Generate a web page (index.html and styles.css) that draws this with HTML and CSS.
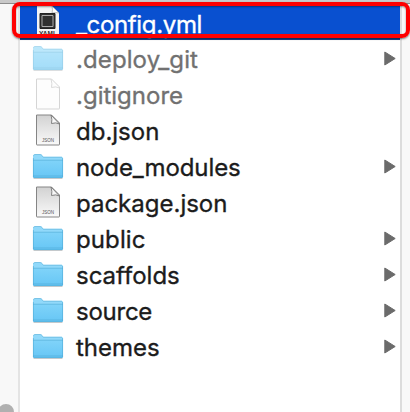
FILE: index.html
```
<!DOCTYPE html>
<html lang="en">
<head>
<meta charset="utf-8">
<title>Files</title>
<link rel="stylesheet" href="styles.css">
</head>
<body>
<svg class="defs" aria-hidden="true">
  <defs>
    <linearGradient id="fold" x1="0" y1="0" x2="0" y2="1"><stop offset="0" stop-color="#80d3f9"/><stop offset="1" stop-color="#66c6f5"/></linearGradient>
    <linearGradient id="paper" x1="0" y1="0" x2="0" y2="1"><stop offset="0" stop-color="#d2d2d2"/><stop offset="1" stop-color="#fafafa"/></linearGradient>
    <symbol id="folder" viewBox="0 0 32 28">
      <path d="M1.5 26h29v1h-29z" fill="#000" opacity=".2"/>
      <path d="M1 4.2Q1 2.2 3 2.2H8Q9.3 2.2 10 3.2L11.3 4.8H29.5Q31 4.8 31 6.5V10H1z" fill="#91d9fa"/>
      <path d="M1.5 4V3.7Q2 2.5 3 2.5H8Q9.3 2.5 10 3.5L11.3 5.3H30" fill="none" stroke="#6dbde2" stroke-width=".8"/>
      <path d="M1 8.2H31V24.7Q31 26 29.7 26H2.3Q1 26 1 24.7z" fill="url(#fold)"/>
      <path d="M1.4 6V24.7Q1.4 25.6 2.3 25.6H29.7Q30.6 25.6 30.6 24.7V6M1 8.2H31M1 24H31" fill="none" stroke="#4da9d5" stroke-width=".6"/>
    </symbol>
    <symbol id="file" viewBox="0 0 26 32">
      <path d="M1.5 1H16.5L24.5 9V30.5Q24.5 31 24 31H2Q1.5 31 1.5 30.5z" fill="url(#paper)" stroke="#858585" stroke-width="1"/>
      <path d="M16 1Q17.5 6 16.5 9.5Q21 8 24.5 10z" fill="#f8f8f8" stroke="#777" stroke-width=".9"/>
    </symbol>
    <symbol id="blank" viewBox="0 0 26 32">
      <path d="M1.5 1H16.5L24.5 9V30.5Q24.5 31 24 31H2Q1.5 31 1.5 30.5z" fill="#fdfdfd" stroke="#d5d5d5" stroke-width="1"/>
      <path d="M16 1Q17.5 6 16.5 9.5Q21 8 24.5 10" fill="none" stroke="#dadada" stroke-width="1"/>
    </symbol>
  </defs>
</svg>
<div class="window">
  <div class="topbar"></div>
  <div class="gutter"></div>
  <ul class="list">
    <li class="row selected">
      <span class="icon"><svg width="26" height="32" viewBox="0 0 26 32"><path d="M2 1H17L24 8V32H2z" fill="#f4f4f4"/><path d="M17 1Q18 5 17 8Q21 7 24 8z" fill="#fff" stroke="#999" stroke-width=".6"/><path d="M5 8.5H20V23.5H5z" fill="#303030" stroke="#222"/><path d="M7 10.5H18V21.5H7z" fill="#303030" stroke="#aaa"/><text class="kind yaml" x="13" y="31">YAML</text></svg></span>
      <span class="name n0">_config.yml</span>
    </li>
    <li class="row dim"><span class="icon"><svg class="faded" width="32" height="28"><use href="#folder"/></svg></span><span class="name n1">.deploy_git</span><svg class="arrow" width="12" height="15"><path d="M.8 1L11.2 7.5L.8 14z"/></svg></li>
    <li class="row dim"><span class="icon"><svg width="26" height="32"><use href="#blank"/></svg></span><span class="name n2">.gitignore</span></li>
    <li class="row"><span class="icon"><svg width="26" height="32"><use href="#file"/><text class="kind" x="13" y="27.5">JSON</text></svg></span><span class="name n3">db.json</span></li>
    <li class="row"><span class="icon"><svg width="32" height="28"><use href="#folder"/></svg></span><span class="name n4">node_modules</span><svg class="arrow" width="12" height="15"><path d="M.8 1L11.2 7.5L.8 14z"/></svg></li>
    <li class="row"><span class="icon"><svg width="26" height="32"><use href="#file"/><text class="kind" x="13" y="27.5">JSON</text></svg></span><span class="name n5">package.json</span></li>
    <li class="row"><span class="icon"><svg width="32" height="28"><use href="#folder"/></svg></span><span class="name n6">public</span><svg class="arrow" width="12" height="15"><path d="M.8 1L11.2 7.5L.8 14z"/></svg></li>
    <li class="row"><span class="icon"><svg width="32" height="28"><use href="#folder"/></svg></span><span class="name n7">scaffolds</span><svg class="arrow" width="12" height="15"><path d="M.8 1L11.2 7.5L.8 14z"/></svg></li>
    <li class="row"><span class="icon"><svg width="32" height="28"><use href="#folder"/></svg></span><span class="name n8">source</span><svg class="arrow" width="12" height="15"><path d="M.8 1L11.2 7.5L.8 14z"/></svg></li>
    <li class="row"><span class="icon"><svg width="32" height="28"><use href="#folder"/></svg></span><span class="name n9">themes</span><svg class="arrow" width="12" height="15"><path d="M.8 1L11.2 7.5L.8 14z"/></svg></li>
  </ul>
  <div class="gutter"></div>
</div>
<div class="highlight"></div>
<div class="knob"></div>
</body>
</html>
```
FILE: styles.css
```
* { box-sizing: border-box; }
body { margin: 0; overflow: hidden; background: #fff; font-family: Inter, "Liberation Sans", sans-serif; }
.defs { position: absolute; width: 0; height: 0; }
.window { width: 410px; height: 412px; display: grid; grid-template: 4px 1fr / 20px 382px 8px; }
.topbar { grid-column: 1 / -1; background: #c9c9c9; border-bottom: 1px solid #8d8d8d; }
.gutter { background: #f8f8f8; }
.gutter:nth-child(2) { border-right: 2px solid #e4e4e4; }
.list { margin: 0; padding: 0; list-style: none; border-right: 2px solid #dcdcdc; }
.row { height: 36px; display: flex; align-items: center; padding: 0 4px 0 12px; color: #1c1c1c; }
.row.dim { color: #717171; }
.row.selected { color: #fff; background: #0950d0; border-bottom: 2px solid #17428e; }
.icon { width: 32px; height: 32px; display: flex; align-items: center; justify-content: center; }
.icon svg, .arrow { display: block; flex: none; }
.faded { opacity: .6; }
.kind { font: 400 4.5px "Liberation Sans", sans-serif; fill: #555; text-anchor: middle; }
.kind.yaml { font-size: 6.5px; font-weight: 700; fill: #333; }
.name { margin-left: 12px; padding-top: 3px; font-size: 24px; line-height: 33px; font-weight: 400; white-space: pre; -webkit-text-stroke: .35px currentColor; }
.n0 { letter-spacing: -.35px; padding-top: 6px; }
.n1 { letter-spacing: .1px; }
.n4 { letter-spacing: -.1px; }
.n6 { letter-spacing: .1px; }
.n8 { letter-spacing: -.25px; }
.arrow { margin-left: auto; fill: #6b6b6b; stroke: #6b6b6b; stroke-width: 1; stroke-linejoin: round; }
.highlight { position: absolute; left: 12px; top: 2px; width: 398px; height: 36px; border: 4px solid #fe0000; border-radius: 8px; box-shadow: 0 1px 2px rgba(0,0,0,.5), inset 0 1px 2px rgba(0,0,0,.4); }
.knob { position: absolute; left: -2px; top: 404px; width: 16px; height: 16px; border-radius: 50%; background: #b0b0b0; }
```
